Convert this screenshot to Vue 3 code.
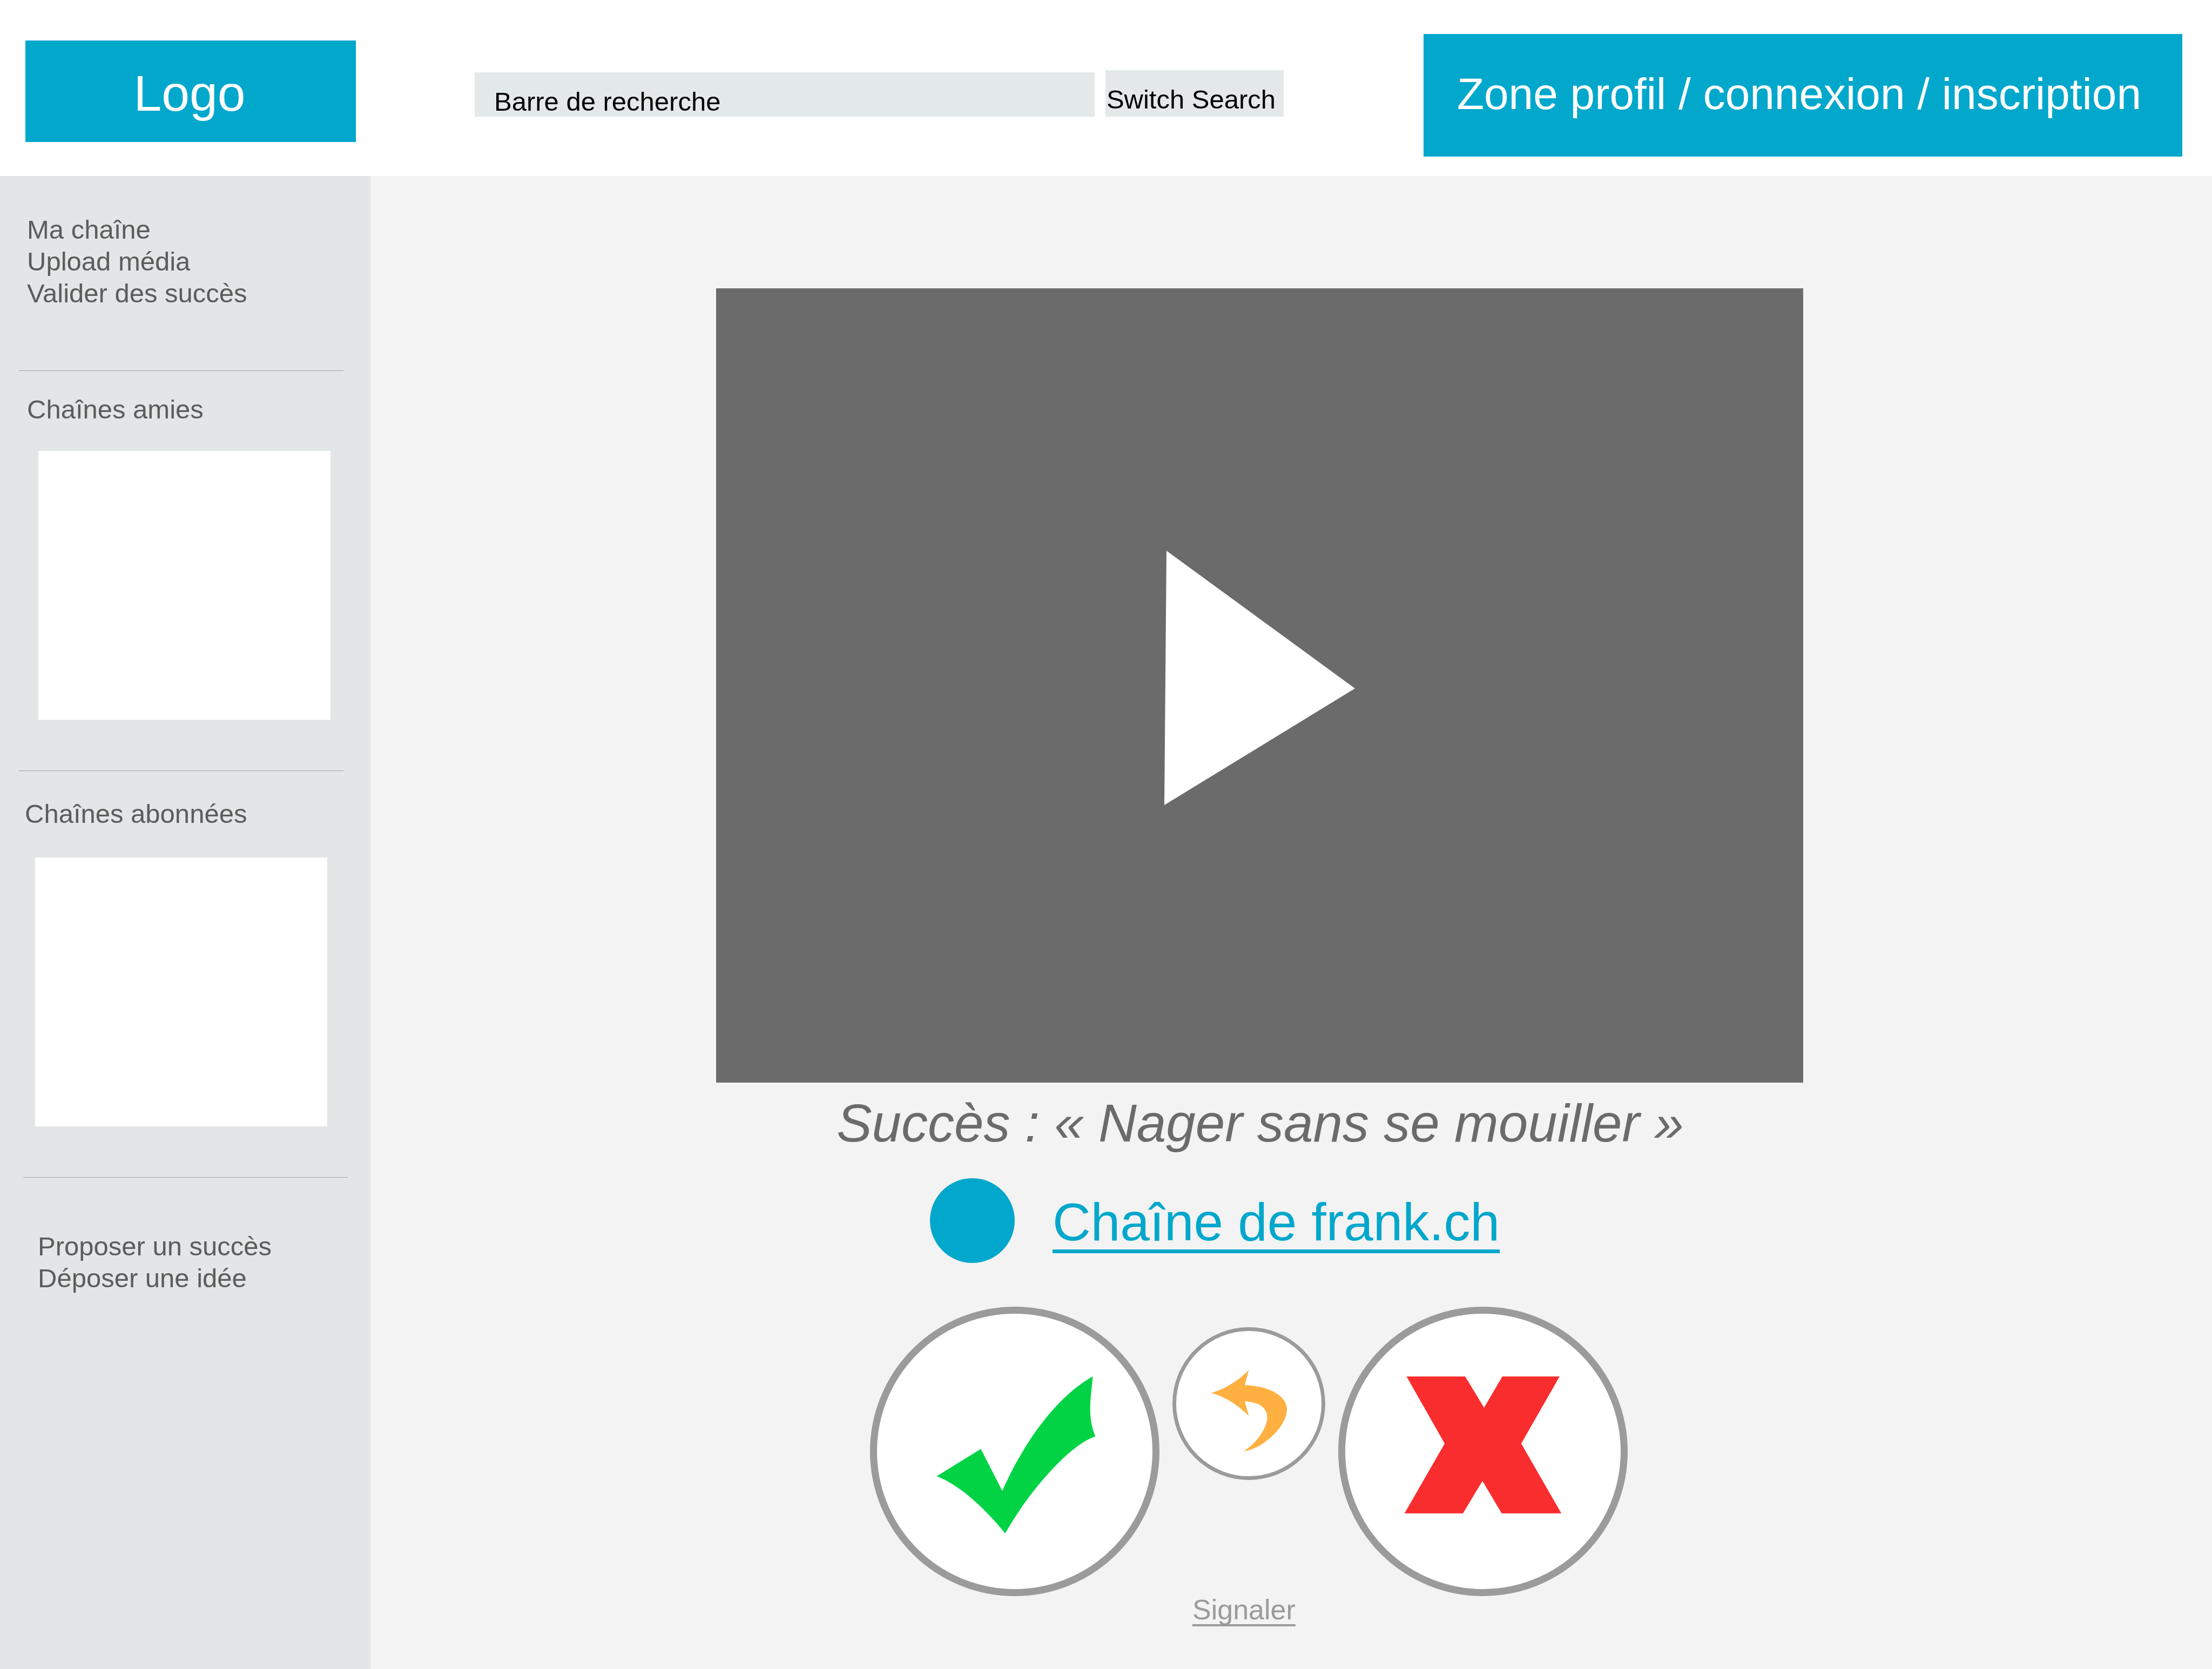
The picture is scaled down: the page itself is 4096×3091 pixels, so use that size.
<script setup>
import { ref } from 'vue'

const query = ref('Barre de recherche')
const accountLinks = ['Ma chaîne', 'Upload média', 'Valider des succès']
const ideaLinks = ['Proposer un succès', 'Déposer une idée']
</script>

<template>
  <div class="page">
    <header class="topbar">
      <a class="logo" href="#">Logo</a>
      <form class="search" @submit.prevent>
        <input v-model="query" class="search-field" type="text" aria-label="Barre de recherche" />
        <button class="search-switch" type="button">Switch Search</button>
      </form>
      <a class="profile" href="#">Zone profil / connexion / inscription</a>
    </header>

    <div class="body">
      <aside class="sidebar">
        <nav class="links account">
          <a v-for="item in accountLinks" :key="item" href="#">{{ item }}</a>
        </nav>
        <section class="channels friends">
          <h2>Chaînes amies</h2>
          <div class="channel-list"></div>
        </section>
        <section class="channels subscribed">
          <h2>Chaînes abonnées</h2>
          <div class="channel-list"></div>
        </section>
        <nav class="links ideas">
          <a v-for="item in ideaLinks" :key="item" href="#">{{ item }}</a>
        </nav>
      </aside>

      <main class="stage">
        <button class="video" type="button" aria-label="Lire la vidéo">
          <svg viewBox="0 0 2013 1471" aria-hidden="true">
            <path d="M834 486 L1183 741 L830 957 Z" fill="#fff" />
          </svg>
        </button>
        <h1>Succès : « Nager sans se mouiller »</h1>
        <div class="author">
          <span class="avatar"></span>
          <a href="#">Chaîne de frank.ch</a>
        </div>
        <div class="votes">
          <button class="vote" type="button" aria-label="Valider">
            <svg viewBox="74 103 1356 1356" aria-hidden="true">
              <path
                fill="#02d345"
                d="M368 903 L585 769 L691 976 C800 730 960 510 1136 412 C1130 505 1105 600 1149 708 C1030 742 825 972 705 1185 C600 1055 475 943 368 903 Z"
              />
            </svg>
          </button>
          <button class="vote undo" type="button" aria-label="Revenir">
            <svg viewBox="151 144 1233 1233" aria-hidden="true">
              <path
                fill="#ffb040"
                d="M444 670 C560 643 705 547 767 474 L733 603 C950 610 1091 700 1091 810 C1091 965 860 1160 723 1163 C830 1108 924 960 924 880 C924 800 860 747 733 741 L767 867 C700 790 555 692 444 670 Z"
              />
            </svg>
          </button>
          <button class="vote" type="button" aria-label="Refuser">
            <svg viewBox="80 103 1357 1357" aria-hidden="true">
              <path
                fill="#f92d2e"
                d="M382 412 H671 L764 566 L854 412 H1136 L947 743 L1145 1087 H851 L756 927 L660 1087 H372 L570 743 Z"
              />
            </svg>
          </button>
        </div>
        <a class="report" href="#">Signaler</a>
      </main>
    </div>
  </div>
</template>

<style>
body {
  margin: 0;
}
</style>

<style scoped>
.page,
.page * {
  box-sizing: border-box;
}

.page {
  display: flex;
  flex-direction: column;
  min-height: 100vh;
  background: #fff;
  font-family: "Liberation Sans", Arial, sans-serif;
  font-size: 49px;
  line-height: 59px;
}

a {
  color: inherit;
  text-decoration: none;
}

button,
input {
  margin: 0;
  border: 0;
  border-radius: 0;
  font: inherit;
}

button {
  cursor: pointer;
}

.topbar {
  display: flex;
  align-items: flex-start;
  padding: 63px 55px 36px 47px;
}

.logo {
  flex: 0 0 612px;
  margin-top: 12px;
  padding: 45px 4px 37px 0;
  background: #02a7cc;
  color: #fff;
  font-size: 93px;
  line-height: 106px;
  text-align: center;
}

.search {
  display: flex;
  flex: 1;
  align-items: flex-end;
  gap: 20px;
  margin: 67px 259px 0 220px;
}

.search-field,
.search-switch {
  background: #e3e9e9;
  color: #000;
  line-height: 56px;
}

.search-field {
  flex: 1;
  min-width: 0;
  height: 82px;
  padding: 26px 0 0 36px;
}

.search-switch {
  flex: 0 0 330px;
  padding: 26px 0 4px 2px;
  text-align: left;
  white-space: nowrap;
}

.profile {
  padding: 64px 76px 69px 62px;
  background: #02a7cc;
  color: #fff;
  font-size: 82px;
  line-height: 94px;
  white-space: nowrap;
}

.body {
  display: flex;
  flex: 1;
}

.sidebar {
  flex: 0 0 686px;
  background: #e2e6e6;
  color: #5c5c5c;
}

.links {
  display: flex;
  flex-direction: column;
}

.account {
  padding: 70px 0 113px 50px;
}

.channels {
  margin: 0 50px 0 35px;
  padding-bottom: 94px;
  border-top: 1px solid #a0a4a4;
}

.channels h2 {
  margin: 0;
  font-size: 49px;
  font-weight: 400;
}

.channel-list {
  height: 498px;
  background: #fff;
}

.friends h2 {
  padding: 42px 0 47px 15px;
}

.friends .channel-list {
  margin: 0 24px 0 36px;
}

.subscribed h2 {
  padding: 50px 0 51px 11px;
}

.subscribed .channel-list {
  margin: 0 30px;
}

.ideas {
  margin: 0 42px 0 43px;
  padding: 98px 0 0 27px;
  border-top: 1px solid #a0a4a4;
}

.stage {
  flex: 1;
  min-width: 0;
  padding: 208px 757px 0 640px;
  background: #f3f3f3;
}

.video {
  display: block;
  width: 100%;
  padding: 0;
  background: #6b6b6b;
}

.video svg {
  display: block;
  width: 100%;
}

h1 {
  margin: 0;
  padding: 19px 0 0 2px;
  color: #6b6b6b;
  font-size: 98px;
  font-style: italic;
  font-weight: 400;
  line-height: 112px;
  text-align: center;
  white-space: nowrap;
}

.author {
  display: flex;
  gap: 70px;
  margin: 46px 0 0 396px;
  color: #02a7cc;
  font-size: 98px;
  line-height: 112px;
}

.avatar {
  width: 157px;
  height: 157px;
  border-radius: 50%;
  background: #02a7cc;
}

.author a {
  padding-top: 25px;
  text-decoration: underline 7px;
  text-decoration-skip-ink: none;
  text-underline-offset: 17px;
}

.votes {
  display: flex;
  align-items: flex-start;
  gap: 24px;
  margin: 81px 0 0 285px;
}

.vote {
  flex: none;
  width: 536px;
  height: 536px;
  padding: 0;
  border: 13px solid #9b9b9b;
  border-radius: 50%;
  background: #fff;
}

.vote svg {
  display: block;
  width: 100%;
}

.undo {
  width: 283px;
  height: 283px;
  margin-top: 38px;
  border-width: 7px;
}

.report {
  display: block;
  width: fit-content;
  margin: -4px 0 0 882px;
  color: #9b9b9b;
  font-size: 52px;
  text-decoration: underline 4px;
  text-decoration-skip-ink: none;
  text-underline-offset: 9px;
}
</style>
